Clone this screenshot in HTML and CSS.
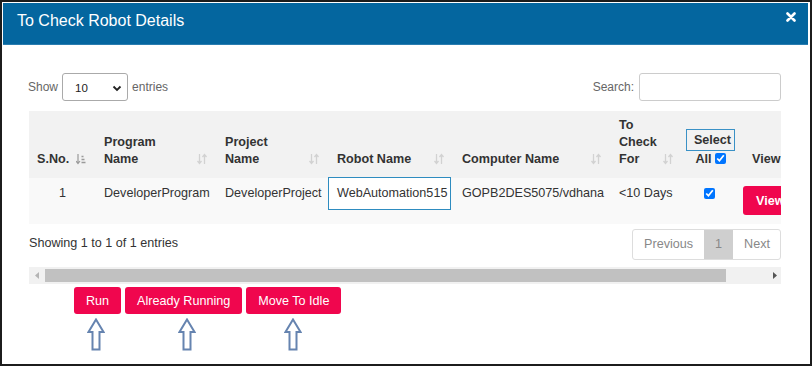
FILE: index.html
```html
<!DOCTYPE html>
<html lang="en">
<head>
    <meta charset="UTF-8">
    <meta name="viewport" content="width=device-width, initial-scale=1.0">
    <title>To Check Robot Details</title>
    <link rel="stylesheet" href="styles.css">
</head>
<body>
    <div class="frame">
        <div class="modal-header">
            <h3 class="modal-title">To Check Robot Details</h3>
            <span class="close">
                <svg width="10" height="10" viewBox="0 0 10 10"><path d="M1.5 1.5 L8.5 8.5 M8.5 1.5 L1.5 8.5" stroke="#fff" stroke-width="2.6" stroke-linecap="round"/></svg>
            </span>
        </div>

        <div class="modal-body">
            <div class="controls">
                <label class="length">Show
                    <span class="select-box">10
                        <svg width="10" height="7" viewBox="0 0 10 7"><path d="M1.5 1.5 L5 5 L8.5 1.5" fill="none" stroke="#222" stroke-width="1.8"/></svg>
                    </span>
                    entries</label>
                <label class="search">Search: <input type="text"></label>
            </div>

            <div class="table-scroll">
                <table class="grid">
                    <colgroup>
                        <col style="width:67px"><col style="width:121px"><col style="width:112px"><col style="width:125px">
                        <col style="width:157px"><col style="width:72px"><col style="width:57px"><col style="width:70px">
                    </colgroup>
                    <thead>
                        <tr>
                            <th><div class="th-in"><span>S.No.</span>
                                <svg class="sort" width="10" height="12" viewBox="0 0 10 12"><path d="M2 1 V10.5 M0 8 L2 10.5 L4 8" fill="none" stroke="#9a9a9a" stroke-width="1.2"/><path d="M5.5 3.5 H7.5 M5.5 6.5 H8.5 M5.5 9.5 H9.5" stroke="#9a9a9a" stroke-width="1.3"/></svg></div></th>
                            <th><div class="th-in"><span>Program<br>Name</span>
                                <svg class="sort" width="10" height="12" viewBox="0 0 10 12"><path d="M2.5 1 V10.5 M0.5 8 L2.5 10.5 L4.5 8 M7.5 11 V1.5 M5.5 4 L7.5 1.5 L9.5 4" fill="none" stroke="#d2d2d2" stroke-width="1.3"/></svg></div></th>
                            <th><div class="th-in"><span>Project<br>Name</span>
                                <svg class="sort" width="10" height="12" viewBox="0 0 10 12"><path d="M2.5 1 V10.5 M0.5 8 L2.5 10.5 L4.5 8 M7.5 11 V1.5 M5.5 4 L7.5 1.5 L9.5 4" fill="none" stroke="#d2d2d2" stroke-width="1.3"/></svg></div></th>
                            <th><div class="th-in"><span>Robot Name</span>
                                <svg class="sort" width="10" height="12" viewBox="0 0 10 12"><path d="M2.5 1 V10.5 M0.5 8 L2.5 10.5 L4.5 8 M7.5 11 V1.5 M5.5 4 L7.5 1.5 L9.5 4" fill="none" stroke="#d2d2d2" stroke-width="1.3"/></svg></div></th>
                            <th><div class="th-in"><span>Computer Name</span>
                                <svg class="sort" width="10" height="12" viewBox="0 0 10 12"><path d="M2.5 1 V10.5 M0.5 8 L2.5 10.5 L4.5 8 M7.5 11 V1.5 M5.5 4 L7.5 1.5 L9.5 4" fill="none" stroke="#d2d2d2" stroke-width="1.3"/></svg></div></th>
                            <th><div class="th-in"><span>To<br>Check<br>For</span>
                                <svg class="sort" width="10" height="12" viewBox="0 0 10 12"><path d="M2.5 1 V10.5 M0.5 8 L2.5 10.5 L4.5 8 M7.5 11 V1.5 M5.5 4 L7.5 1.5 L9.5 4" fill="none" stroke="#d2d2d2" stroke-width="1.3"/></svg></div></th>
                            <th class="select-all"><span class="focus-box">Select</span><br>All<input type="checkbox" checked></th>
                            <th class="view-head">View</th>
                        </tr>
                    </thead>
                    <tbody>
                        <tr>
                            <td class="num">1</td>
                            <td>DeveloperProgram</td>
                            <td>DeveloperProject</td>
                            <td><div class="focus-cell">WebAutomation515</div></td>
                            <td>GOPB2DES5075/vdhana</td>
                            <td>&lt;10 Days</td>
                            <td class="check"><input type="checkbox" checked></td>
                            <td class="view-cell"><button class="btn">View</button></td>
                        </tr>
                    </tbody>
                </table>
            </div>

            <div class="info-row">
                <div class="info">Showing 1 to 1 of 1 entries</div>
                <ul class="pager">
                    <li>Previous</li>
                    <li class="active">1</li>
                    <li>Next</li>
                </ul>
            </div>

            <div class="scrollbar">
                <svg width="4" height="7" viewBox="0 0 4 7"><path d="M4 0 L0 3.5 L4 7 Z" fill="#b4b4b4"/></svg>
                <div class="thumb"></div>
                <svg width="4" height="7" viewBox="0 0 4 7"><path d="M0 0 L4 3.5 L0 7 Z" fill="#555"/></svg>
            </div>

            <div class="actions">
                <button class="btn">Run</button>
                <button class="btn">Already Running</button>
                <button class="btn">Move To Idle</button>
            </div>

            <div class="arrows">
                <svg class="arrow a1" width="18" height="33" viewBox="0 0 18 33"><path d="M9 1.5 L16.5 14 H12.5 V31.5 H5.5 V14 H1.5 Z" fill="#fff" stroke="#6684b0" stroke-width="2" stroke-linejoin="miter"/></svg>
                <svg class="arrow a2" width="18" height="33" viewBox="0 0 18 33"><path d="M9 1.5 L16.5 14 H12.5 V31.5 H5.5 V14 H1.5 Z" fill="#fff" stroke="#6684b0" stroke-width="2" stroke-linejoin="miter"/></svg>
                <svg class="arrow a3" width="18" height="33" viewBox="0 0 18 33"><path d="M9 1.5 L16.5 14 H12.5 V31.5 H5.5 V14 H1.5 Z" fill="#fff" stroke="#6684b0" stroke-width="2" stroke-linejoin="miter"/></svg>
            </div>
        </div>
    </div>
</body>
</html>
```

FILE: styles.css
```css
body {
    margin: 0;
    font-family: 'Liberation Sans', Arial, sans-serif;
    font-size: 12.6px;
    color: #333;
    background: #fff;
}
.frame {
    width: 812px;
    height: 366px;
    box-sizing: border-box;
    border: 2px solid #1c1c1c;
    overflow: hidden;
}
.modal-header {
    margin: 1px 2px 0 1px;
    height: 42px;
    box-sizing: border-box;
    padding: 8px 12px 0 14px;
    background: #04669f;
    border-bottom: 1px solid #2a7db0;
    display: flex;
    justify-content: space-between;
    align-items: flex-start;
}
.modal-title {
    margin: 0;
    font-size: 16px;
    font-weight: normal;
    line-height: 20px;
    color: #fff;
}
.close {
    margin-top: 1px;
    display: flex;
}
.modal-body {
    padding: 28px 29px 0 27px;
}
.controls {
    display: flex;
    justify-content: space-between;
    align-items: center;
    height: 28px;
    font-size: 12px;
    color: #666;
}
.length {
    display: flex;
    align-items: center;
    gap: 4px;
    margin-left: -1px;
}
.select-box {
    width: 66px;
    height: 28px;
    box-sizing: border-box;
    border: 1px solid #aaa;
    border-radius: 3px;
    padding: 2px 5px 0 12px;
    display: flex;
    align-items: center;
    justify-content: space-between;
    font-size: 11.5px;
    color: #222;
}
.search {
    display: flex;
    align-items: center;
    gap: 5px;
}
.search input {
    width: 142px;
    height: 28px;
    box-sizing: border-box;
    border: 1px solid #ccc;
    border-radius: 3px;
    margin: 0;
}
.table-scroll {
    margin-top: 10px;
    width: 752px;
    overflow: hidden;
}
.grid {
    table-layout: fixed;
    border-collapse: collapse;
    width: 781px;
}
.grid th {
    height: 67px;
    box-sizing: border-box;
    padding: 6px 10px 10px 8px;
    background: #f2f2f2;
    font-weight: bold;
    line-height: 17px;
    text-align: left;
    vertical-align: bottom;
    white-space: nowrap;
}
.th-in {
    display: flex;
    justify-content: space-between;
    align-items: flex-end;
}
.sort {
    margin-bottom: 3px;
    flex-shrink: 0;
}
.select-all {
    text-align: center !important;
    padding-left: 2px !important;
    padding-right: 4px !important;
}
.focus-box {
    display: inline-block;
    border: 1px solid #3a91c6;
    line-height: 20px;
    padding: 0 3px 0 7px;
}
.select-all input {
    width: 11px;
    height: 11px;
    margin: 0 0 0 3px;
    vertical-align: -1px;
}
.view-head {
    padding-left: 12px !important;
}
.grid td {
    height: 46px;
    box-sizing: border-box;
    padding: 8px;
    background: #f9f9f9;
    line-height: 15px;
    vertical-align: top;
    white-space: nowrap;
}
.grid td.num {
    text-align: center;
}
.focus-cell {
    margin: -9px -5px 0 -9px;
    padding: 8px 0 8px 8px;
    border: 1px solid #2e8cc0;
    background: #fff;
}
.grid td.check {
    text-align: center;
    padding-left: 0;
    padding-right: 4px;
}
.check input {
    width: 11px;
    height: 11px;
    margin: 2px 0 0 0;
}
.grid td.view-cell {
    padding-left: 3px;
}
.btn {
    height: 27px;
    padding: 0 12px;
    border: none;
    border-radius: 3px;
    background: #f0064e;
    color: #fff;
    font-family: inherit;
    font-size: 12.6px;
}
.view-cell .btn {
    height: 29px;
    padding: 0 13px;
    font-weight: bold;
}
.info-row {
    margin-top: 5px;
    display: flex;
    justify-content: space-between;
    align-items: flex-start;
}
.info {
    padding-top: 7px;
    line-height: 15px;
}
.pager {
    list-style: none;
    margin: 0;
    padding: 0;
    display: flex;
    border: 1px solid #ddd;
    border-radius: 3px;
    color: #888;
}
.pager li {
    padding: 7px 11px;
    line-height: 15px;
}
.pager li:last-child {
    padding: 7px 10px 7px 11px;
}
.pager .active {
    background: #cfcfcf;
    padding: 7px 11px;
}
.scrollbar {
    margin-top: 7px;
    height: 17px;
    background: #f1f1f1;
    display: flex;
    align-items: center;
    padding: 0 4px 0 6px;
    gap: 6px;
}
.thumb {
    width: 681px;
    height: 13px;
    margin-right: auto;
    background: #c1c1c1;
}
.actions {
    margin: 3px 0 0 45px;
    display: flex;
    gap: 4px;
}
.arrows {
    margin-top: 4px;
    display: flex;
}
.a1 {
    margin-left: 58px;
}
.a2 {
    margin-left: 73px;
}
.a3 {
    margin-left: 88px;
}
```
